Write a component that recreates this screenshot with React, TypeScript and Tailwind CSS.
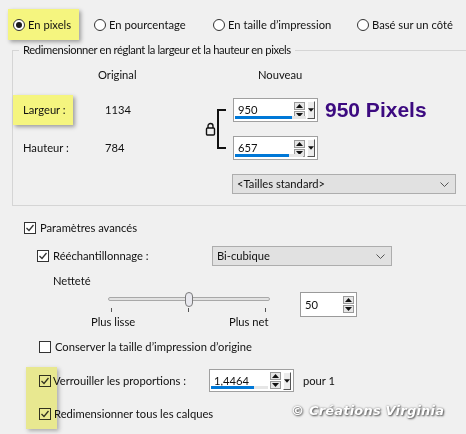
import React from "react";

const font = { fontFamily: 'Lato, "Segoe UI", "Noto Sans", sans-serif' };

function Radio({ checked = false }: { checked?: boolean }) {
  return (
    <span className="flex h-[12px] w-[12px] shrink-0 items-center justify-center rounded-full border border-[#333] bg-white">
      {checked && <span className="h-[6px] w-[6px] rounded-full bg-[#1a1a1a]" />}
    </span>
  );
}

function Checkbox({ checked = false, clear = false }: { checked?: boolean; clear?: boolean }) {
  return (
    <span
      className={`flex h-[12px] w-[12px] shrink-0 items-center justify-center border border-[#333] ${
        clear ? "bg-transparent" : "bg-white"
      }`}
    >
      {checked && (
        <svg width="10" height="10" viewBox="0 0 10 10">
          <path d="M1.5 5 L4 7.5 L8.5 2" fill="none" stroke="#333" strokeWidth="1.3" />
        </svg>
      )}
    </span>
  );
}

function Arrow({ up }: { up?: boolean }) {
  return (
    <svg width="7" height="4" viewBox="0 0 7 4">
      {up ? <path d="M0 4 L3.5 0 L7 4 Z" fill="#111" /> : <path d="M0 0 L7 0 L3.5 4 Z" fill="#111" />}
    </svg>
  );
}

function SpinButtons() {
  return (
    <div className="flex flex-col gap-px">
      <span className="flex h-[8px] w-[11px] items-center justify-center border border-[#9a9a9a] bg-[#e6e6e6]">
        <Arrow up />
      </span>
      <span className="flex h-[8px] w-[11px] items-center justify-center border border-[#9a9a9a] bg-[#e6e6e6]">
        <Arrow />
      </span>
    </div>
  );
}

function NumberField({ value, bar, width = 85, height = 24 }: { value: string; bar: number; width?: number; height?: number }) {
  return (
    <div
      className="relative flex shrink-0 items-center border border-[#a0a0a0] bg-white pl-[4px]"
      style={{ width, height }}
    >
      <span className="flex-1 text-[#111]">{value}</span>
      <div className="mr-[2px] flex items-center gap-[2px]">
        <SpinButtons />
        <span className="flex h-[18px] w-[8px] items-center justify-center border-r border-b border-r-[#555] border-b-[#555] border-l border-t border-l-white border-t-white bg-[#ececec]">
          <Arrow />
        </span>
      </div>
      <div className="absolute bottom-[2px] left-[1px] h-[3px] bg-[#e6e6e6]" style={{ width: bar + 14 }} />
      <div className="absolute bottom-[2px] left-[1px] h-[3px] bg-[#0078d7]" style={{ width: bar }} />
    </div>
  );
}

function Select({ label, width }: { label: string; width: number }) {
  return (
    <div
      className="flex h-[20px] shrink-0 items-center justify-between border border-[#adadad] bg-[#e1e1e1] pl-[4px] pr-[6px]"
      style={{ width }}
    >
      <span className="text-[#111]">{label}</span>
      <svg width="9" height="5" viewBox="0 0 9 5">
        <path d="M0.5 0.5 L4.5 4.5 L8.5 0.5" fill="none" stroke="#555" strokeWidth="1" />
      </svg>
    </div>
  );
}

export default function App() {
  return (
    <div
      className="relative h-[434px] w-[466px] overflow-hidden whitespace-nowrap bg-[#f0f0f0] text-[11.2px] leading-[16px] text-[#111]"
      style={font}
    >
      {/* top radios */}
      <div className="box-content flex h-[31px] items-center pt-[9px]">
        <div className="ml-[8px] flex h-[31px] w-[71px] items-center bg-[#f5f57f] pl-[5px] shadow-[2px_2px_4px_rgba(0,0,0,0.35)]">
          <Radio checked />
          <span className="ml-[3px]">En pixels</span>
        </div>
        <div className="ml-[15px] flex w-[119px] items-center">
          <Radio />
          <span className="ml-[3px]">En pourcentage</span>
        </div>
        <div className="flex w-[144px] items-center">
          <Radio />
          <span className="ml-[3px]">En taille d’impression</span>
        </div>
        <div className="flex items-center">
          <Radio />
          <span className="ml-[3px]">Basé sur un côté</span>
        </div>
      </div>

      {/* group box */}
      <fieldset className="ml-[12px] mt-[2px] h-[164px] w-[470px] border border-[#d5d5d5]">
        <legend className="ml-[6px] px-[4px] tracking-[-0.35px]">
          Redimensionner en réglant la largeur et la hauteur en pixels
        </legend>
        <div className="mt-[9px] flex h-[16px] items-center">
          <span className="ml-[85px] w-[160px]">Original</span>
          <span>Nouveau</span>
        </div>
        <div className="mt-[15px] flex">
          <div className="flex w-[92px] flex-col">
            <div className="flex h-[24px] items-center">
              <div className="-my-[3px] flex h-[30px] w-[60px] items-center bg-[#f5f57f] pl-[10px] shadow-[2px_2px_4px_rgba(0,0,0,0.35)]">
                Largeur :
              </div>
            </div>
            <div className="mt-[14px] flex h-[24px] items-center pl-[10px]">Hauteur :</div>
          </div>
          <div className="flex w-[100px] flex-col">
            <div className="flex h-[24px] items-center">1134</div>
            <div className="mt-[14px] flex h-[24px] items-center">784</div>
          </div>
          <div className="flex h-[62px] w-[12px] items-center">
            <svg width="11" height="14" viewBox="0 0 11 14">
              <path d="M3 6 V4 A2.5 2.5 0 0 1 8 4 V6" fill="none" stroke="#111" strokeWidth="1.4" />
              <rect x="1.5" y="6" width="8" height="7" rx="1" fill="none" stroke="#111" strokeWidth="1.4" />
            </svg>
          </div>
          <div className="mt-[11px] h-[40px] w-[9px] border-y-2 border-l-2 border-[#111]" />
          <div className="ml-[7px] flex flex-col">
            <div className="flex items-center">
              <NumberField value="950" bar={57} />
              <span
                className="ml-[7px] text-[21px] font-bold leading-[24px] text-[#3c0a80]"
                style={{ fontFamily: '"Liberation Sans", Arial, sans-serif' }}
              >
                950 Pixels
              </span>
            </div>
            <div className="mt-[14px]">
              <NumberField value="657" bar={54} />
            </div>
            <div className="-ml-[1px] mt-[14px]">
              <Select label="<Tailles standard>" width={224} />
            </div>
          </div>
        </div>
      </fieldset>

      {/* advanced */}
      <div className="mt-[14px] flex h-[16px] items-center pl-[24px]">
        <Checkbox checked />
        <span className="ml-[4px]">Paramètres avancés</span>
      </div>
      <div className="mt-[10px] flex h-[20px] items-center pl-[37px]">
        <Checkbox checked />
        <span className="ml-[4px] w-[159px]">Rééchantillonnage :</span>
        <Select label="Bi-cubique" width={180} />
      </div>
      <div className="mt-[7px] flex h-[16px] items-center pl-[53px]">Netteté</div>
      <div className="mt-[3px] flex items-start pl-[108px]">
        <div className="flex w-[162px] flex-col">
          <div className="relative h-[22px]">
            <div className="absolute left-0 right-0 top-[5px] h-[4px] rounded-full border border-[#a8a8a8] bg-[#e2e2e2]" />
            <div className="absolute left-[3px] top-[16px] h-[4px] w-px bg-[#555]" />
            <div className="absolute left-[80px] top-[16px] h-[4px] w-px bg-[#555]" />
            <div className="absolute left-[157px] top-[16px] h-[4px] w-px bg-[#555]" />
            <div className="absolute left-[77px] top-0 h-[15px] w-[8px] rounded-full border border-[#7a7a7a] bg-[#e8e8ee]" />
          </div>
          <div className="flex h-[16px]">
            <span className="-ml-[17px] w-[42px] text-center">Plus lisse</span>
            <span className="ml-[96px] w-[38px] text-center">Plus net</span>
          </div>
        </div>
        <div className="ml-[30px] flex h-[25px] w-[57px] items-center border border-[#9a9a9a] bg-white pl-[4px] pr-[2px]">
          <span className="flex-1">50</span>
          <SpinButtons />
        </div>
      </div>
      <div className="mt-[9px] flex h-[16px] items-center pl-[39px]">
        <Checkbox />
        <span className="ml-[4px]">Conserver la taille d’impression d’origine</span>
      </div>
      <div className="mt-[14px] flex h-[23px] items-center pl-[39px]">
        <Checkbox checked clear />
        <span className="ml-[2px] w-[156px]">Verrouiller les proportions :</span>
        <NumberField value="1,4464" bar={43} height={23} />
        <span className="ml-[9px]">pour 1</span>
      </div>
      <div className="mt-[14px] flex h-[16px] items-center pl-[39px]">
        <Checkbox checked clear />
        <span className="ml-[3px]">Redimensionner tous les calques</span>
      </div>

      {/* highlight over the lock checkboxes */}
      <div className="pointer-events-none absolute left-[26px] top-[367px] h-[62px] w-[31px] bg-[#f5f57f] opacity-80 mix-blend-multiply shadow-[2px_2px_4px_rgba(0,0,0,0.35)]" />

      {/* watermark */}
      <div
        className="pointer-events-none absolute left-[291px] top-[403px] text-[13px] font-bold italic tracking-[0.2px] text-white [text-shadow:1px_1px_2px_#555,0_0_2px_#888]"
        style={{ fontFamily: '"DejaVu Sans", sans-serif' }}
      >
        © Créations Virginia
      </div>
    </div>
  );
}
